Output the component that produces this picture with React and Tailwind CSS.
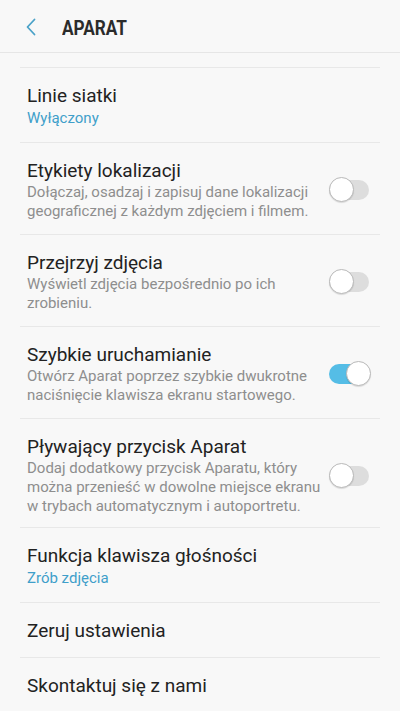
import React, { useState } from 'react';

const rows = [
  { title: 'Linie siatki', sub: 'Wyłączony' },
  {
    title: 'Etykiety lokalizacji',
    desc: 'Dołączaj, osadzaj i zapisuj dane lokalizacji geograficznej z każdym zdjęciem i filmem.',
    toggle: false,
  },
  {
    title: 'Przejrzyj zdjęcia',
    desc: 'Wyświetl zdjęcia bezpośrednio po ich zrobieniu.',
    toggle: false,
  },
  {
    title: 'Szybkie uruchamianie',
    desc: 'Otwórz Aparat poprzez szybkie dwukrotne naciśnięcie klawisza ekranu startowego.',
    toggle: true,
  },
  {
    title: 'Pływający przycisk Aparat',
    desc: 'Dodaj dodatkowy przycisk Aparatu, który można przenieść w dowolne miejsce ekranu w trybach automatycznym i autoportretu.',
    toggle: false,
    tight: true,
  },
  { title: 'Funkcja klawisza głośności', sub: 'Zrób zdjęcia' },
  { title: 'Zeruj ustawienia' },
  { title: 'Skontaktuj się z nami' },
];

// Samsung-style switch
const Switch = ({ on, onChange }) => (
  <button
    onClick={onChange}
    className="relative w-[42px] h-[26px] flex-none flex items-center"
  >
    <span
      className={`block w-[40px] h-[20px] rounded-full ${on ? 'bg-[#55bde6]' : 'bg-[#dddddd]'}`}
    />
    <span
      className={`absolute top-0 w-[25px] h-[25px] rounded-full bg-white border border-[#b9b9b9] shadow-[0_1px_1px_rgba(0,0,0,0.12)] ${
        on ? 'left-[17px]' : 'left-0'
      }`}
    />
  </button>
);

export default function App() {
  const [toggles, setToggles] = useState(rows.map((r) => !!r.toggle));

  return (
    <div className="w-[400px] h-[711px] overflow-hidden bg-[#f8f8f8] font-['Roboto','Noto_Sans',sans-serif]">
      {/* Header */}
      <div className="h-[53px] flex items-center border-b border-[#e6e6e6]">
        <button className="ml-[24px] w-[14px] h-[20px] flex items-center justify-center mt-[2px]">
          <svg width="10" height="18" viewBox="0 0 10 18" fill="none">
            <path d="M8.5 1.5 L1.5 9 L8.5 16.5" stroke="#4aa2c8" strokeWidth="1.8" strokeLinecap="round" strokeLinejoin="round" />
          </svg>
        </button>
        <h1 className="ml-[24px] mt-[3px] text-[20px] font-bold text-[#2b2b2b] leading-none inline-block origin-left scale-x-[0.86]">
          APARAT
        </h1>
      </div>

      <div className="h-[14px]" />

      <div className="mx-5">
        {rows.map((row, i) => (
          <div
            key={row.title}
            className={`border-t border-[#e8e8e8] pl-[7px] pr-[9px] pt-4 flex items-center gap-2 ${
              row.tight ? 'pb-[11px]' : row.desc ? 'pb-[13px]' : 'pb-[14px]'
            }`}
          >
            <div className="flex-1 min-w-0">
              <div className="text-[19px] leading-[24px] text-[#222222]">{row.title}</div>
              {row.sub && (
                <div className="text-[15px] leading-[20px] text-[#3f9fca]">{row.sub}</div>
              )}
              {row.desc && (
                <div className="text-[15px] leading-[19px] text-[#8e8e8e]">{row.desc}</div>
              )}
            </div>
            {row.toggle !== undefined && (
              <Switch
                on={toggles[i]}
                onChange={() => setToggles((t) => t.map((v, j) => (j === i ? !v : v)))}
              />
            )}
          </div>
        ))}
      </div>
    </div>
  );
}
